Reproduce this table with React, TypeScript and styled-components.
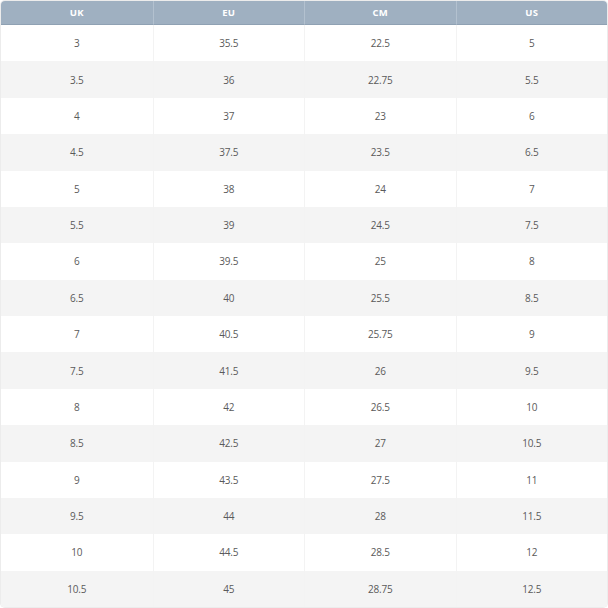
import styled, { createGlobalStyle } from "styled-components";

const GlobalStyle = createGlobalStyle`
    body {
        margin: 0;
        padding: 0;
        background-color: #ffffff;
    }
`

const Page = styled.div`
    width: 608px;
    height: 608px;
    padding: 1px 1px 1px 1px;
    box-sizing: border-box;
`

const Tabela = styled.div`
    height: 100%;
    display: grid;
    grid-template-columns: repeat(4, 1fr);
    grid-template-rows: 24px repeat(16, 1fr);
    border-radius: 4px;
    overflow: hidden;
    box-shadow: 0 0 0 1px #ececec;
    font-family: 'Open Sans', sans-serif;
`

const Cabecalho = styled.div`
    display: flex;
    align-items: center;
    justify-content: center;
    background-color: #9fb0c1;
    color: #ffffff;
    font-size: 9.5px;
    font-weight: 700;
    letter-spacing: 0.2px;
    border-left: 1px solid #b3c1cf;
    border-bottom: 1px solid #8fa1b3;

    &:first-child {
        border-left: none;
    }
`

const Celula = styled.div<{ $par: boolean; $primeira: boolean }>`
    display: flex;
    align-items: center;
    justify-content: center;
    background-color: ${(p) => (p.$par ? "#f4f4f4" : "#ffffff")};
    color: #5a5a5a;
    font-size: 10px;
    letter-spacing: -0.2px;
    border-left: ${(p) => (p.$primeira ? "none" : "1px solid #f3f3f3")};
`

const colunas = ["UK", "EU", "CM", "US"];

const linhas = [
    ["3", "35.5", "22.5", "5"],
    ["3.5", "36", "22.75", "5.5"],
    ["4", "37", "23", "6"],
    ["4.5", "37.5", "23.5", "6.5"],
    ["5", "38", "24", "7"],
    ["5.5", "39", "24.5", "7.5"],
    ["6", "39.5", "25", "8"],
    ["6.5", "40", "25.5", "8.5"],
    ["7", "40.5", "25.75", "9"],
    ["7.5", "41.5", "26", "9.5"],
    ["8", "42", "26.5", "10"],
    ["8.5", "42.5", "27", "10.5"],
    ["9", "43.5", "27.5", "11"],
    ["9.5", "44", "28", "11.5"],
    ["10", "44.5", "28.5", "12"],
    ["10.5", "45", "28.75", "12.5"],
];

const App = () => {
    return (
        <>
            <GlobalStyle />
            <Page>
                <Tabela>
                    {colunas.map((c) => (
                        <Cabecalho key={c}>{c}</Cabecalho>
                    ))}
                    {linhas.map((linha, i) =>
                        linha.map((valor, j) => (
                            <Celula key={`${i}-${j}`} $par={i % 2 === 1} $primeira={j === 0}>
                                {valor}
                            </Celula>
                        ))
                    )}
                </Tabela>
            </Page>
        </>
    )
}

export default App;
